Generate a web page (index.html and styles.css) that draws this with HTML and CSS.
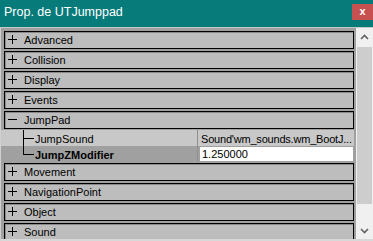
FILE: index.html
```html
<!DOCTYPE html>
<html>
<head>
<meta charset="utf-8">
<link rel="stylesheet" href="styles.css">
</head>
<body>
<div class="window">
  <div class="titlebar">
    <span class="title">Prop. de UTJumppad</span>
    <span class="close">x</span>
  </div>
  <div class="body">
    <div class="list">
      <div class="cat"><span class="sign plus"></span><span class="label">Advanced</span></div>
      <div class="cat"><span class="sign plus"></span><span class="label">Collision</span></div>
      <div class="cat"><span class="sign plus"></span><span class="label">Display</span></div>
      <div class="cat"><span class="sign plus"></span><span class="label">Events</span></div>
      <div class="cat"><span class="sign minus"></span><span class="label">JumpPad</span></div>
      <div class="props">
        <div class="prop">
          <div class="pname"><span class="tree mid"></span><span class="ptext">JumpSound</span></div>
          <div class="pval"><span class="ptext vtext">Sound'wm_sounds.wm_BootJ...</span></div>
        </div>
        <div class="prop sel">
          <div class="pname"><span class="tree last"></span><span class="ptext bold">JumpZModifier</span></div>
          <div class="pval"><span class="edit">1.250000</span></div>
        </div>
      </div>
      <div class="cat"><span class="sign plus"></span><span class="label">Movement</span></div>
      <div class="cat"><span class="sign plus"></span><span class="label">NavigationPoint</span></div>
      <div class="cat"><span class="sign plus"></span><span class="label">Object</span></div>
      <div class="cat"><span class="sign plus"></span><span class="label">Sound</span></div>
    </div>
    <div class="scrollbar">
      <div class="arrow">
        <svg width="9" height="6" viewBox="0 0 9 6"><path d="M1 5 L4.5 1.5 L8 5" fill="none" stroke="#606060" stroke-width="1.6"/></svg>
      </div>
      <div class="track"><div class="thumb"></div></div>
      <div class="arrow">
        <svg width="9" height="6" viewBox="0 0 9 6"><path d="M1 1 L4.5 4.5 L8 1" fill="none" stroke="#606060" stroke-width="1.6"/></svg>
      </div>
    </div>
  </div>
</div>
</body>
</html>
```
FILE: styles.css
```css
* {
  box-sizing: border-box;
}
html, body {
  margin: 0;
  padding: 0;
}
body {
  width: 373px;
  height: 241px;
  overflow: hidden;
  font-family: "Liberation Sans", Arial, sans-serif;
  font-size: 11px;
}
.window {
  width: 373px;
  height: 241px;
  display: flex;
  flex-direction: column;
  background: #077a7a;
}
.titlebar {
  height: 27px;
  display: flex;
  align-items: flex-start;
  justify-content: space-between;
  color: #ffffff;
  flex: none;
}
.title {
  padding: 5px 0 0 4px;
  font-size: 12.5px;
}
.close {
  margin-top: 4px;
  width: 21px;
  height: 16px;
  background: #c75050;
  color: #fff;
  font-weight: bold;
  font-size: 11px;
  line-height: 15px;
  text-align: center;
}
.body {
  flex: 1;
  display: flex;
  background: #a0a0a0;
  border-top: 1px solid #c8c8c8;
  border-left: 1px solid #d0d0d0;
  border-bottom: 2px solid #d8d8d8;
  min-height: 0;
}
.list {
  flex: 1;
  padding: 3px 1px 0 3px;
  display: flex;
  flex-direction: column;
  gap: 2px;
  overflow: hidden;
}
.cat {
  flex: none;
  height: 18px;
  border: 1px solid #000;
  background: #bdbdbd;
  display: flex;
  align-items: center;
  color: #000;
  box-shadow: inset 1px 1px 0 #8a8a8a;
}
.sign {
  width: 9px;
  height: 9px;
  margin: -1px 7px 0 3px;
  position: relative;
  flex: none;
}
.sign::before {
  content: "";
  position: absolute;
  left: 0;
  top: 4px;
  width: 9px;
  height: 1px;
  background: #000;
}
.plus::after {
  content: "";
  position: absolute;
  left: 4px;
  top: 0;
  width: 1px;
  height: 9px;
  background: #000;
}
.label {
  color: #000;
}
.props {
  display: flex;
  flex-direction: column;
  margin: -1px 0 -1px -3px;
}
.prop {
  height: 16px;
  display: flex;
  background: #c8c8c8;
}
.prop.sel {
  background: #a0a0a0;
}
.pname {
  width: 197px;
  display: flex;
  align-items: center;
  color: #000;
  border-right: 1px solid #909090;
  flex: none;
}
.ptext {
  padding-top: 1px;
}
.vtext {
  letter-spacing: -0.2px;
}
.tree {
  width: 11px;
  height: 16px;
  margin: 0 1px 0 22px;
  position: relative;
  align-self: flex-start;
  flex: none;
}
.tree::before {
  content: "";
  position: absolute;
  left: 0;
  top: 0;
  width: 1px;
  background: #000;
}
.tree.mid::before {
  height: 16px;
}
.tree.last::before {
  height: 9px;
}
.tree::after {
  content: "";
  position: absolute;
  left: 0;
  top: 8px;
  width: 11px;
  height: 1px;
  background: #000;
}
.bold {
  font-weight: bold;
}
.pval {
  flex: 1;
  display: flex;
  align-items: center;
  padding-left: 3px;
  color: #000;
  white-space: nowrap;
  overflow: hidden;
}
.edit {
  flex: 1;
  background: #fff;
  height: 14px;
  line-height: 14px;
  padding-left: 2px;
  margin-left: -1px;
  margin-right: 1px;
}
.scrollbar {
  width: 17px;
  flex: none;
  background: #f0f0f0;
  display: flex;
  flex-direction: column;
  margin-left: 1px;
}
.arrow {
  height: 17px;
  display: flex;
  align-items: center;
  justify-content: center;
  flex: none;
}
.track {
  flex: 1;
  position: relative;
}
.thumb {
  margin: 2px 1px 0 1px;
  height: 157px;
  background: #cdcdcd;
}
```
